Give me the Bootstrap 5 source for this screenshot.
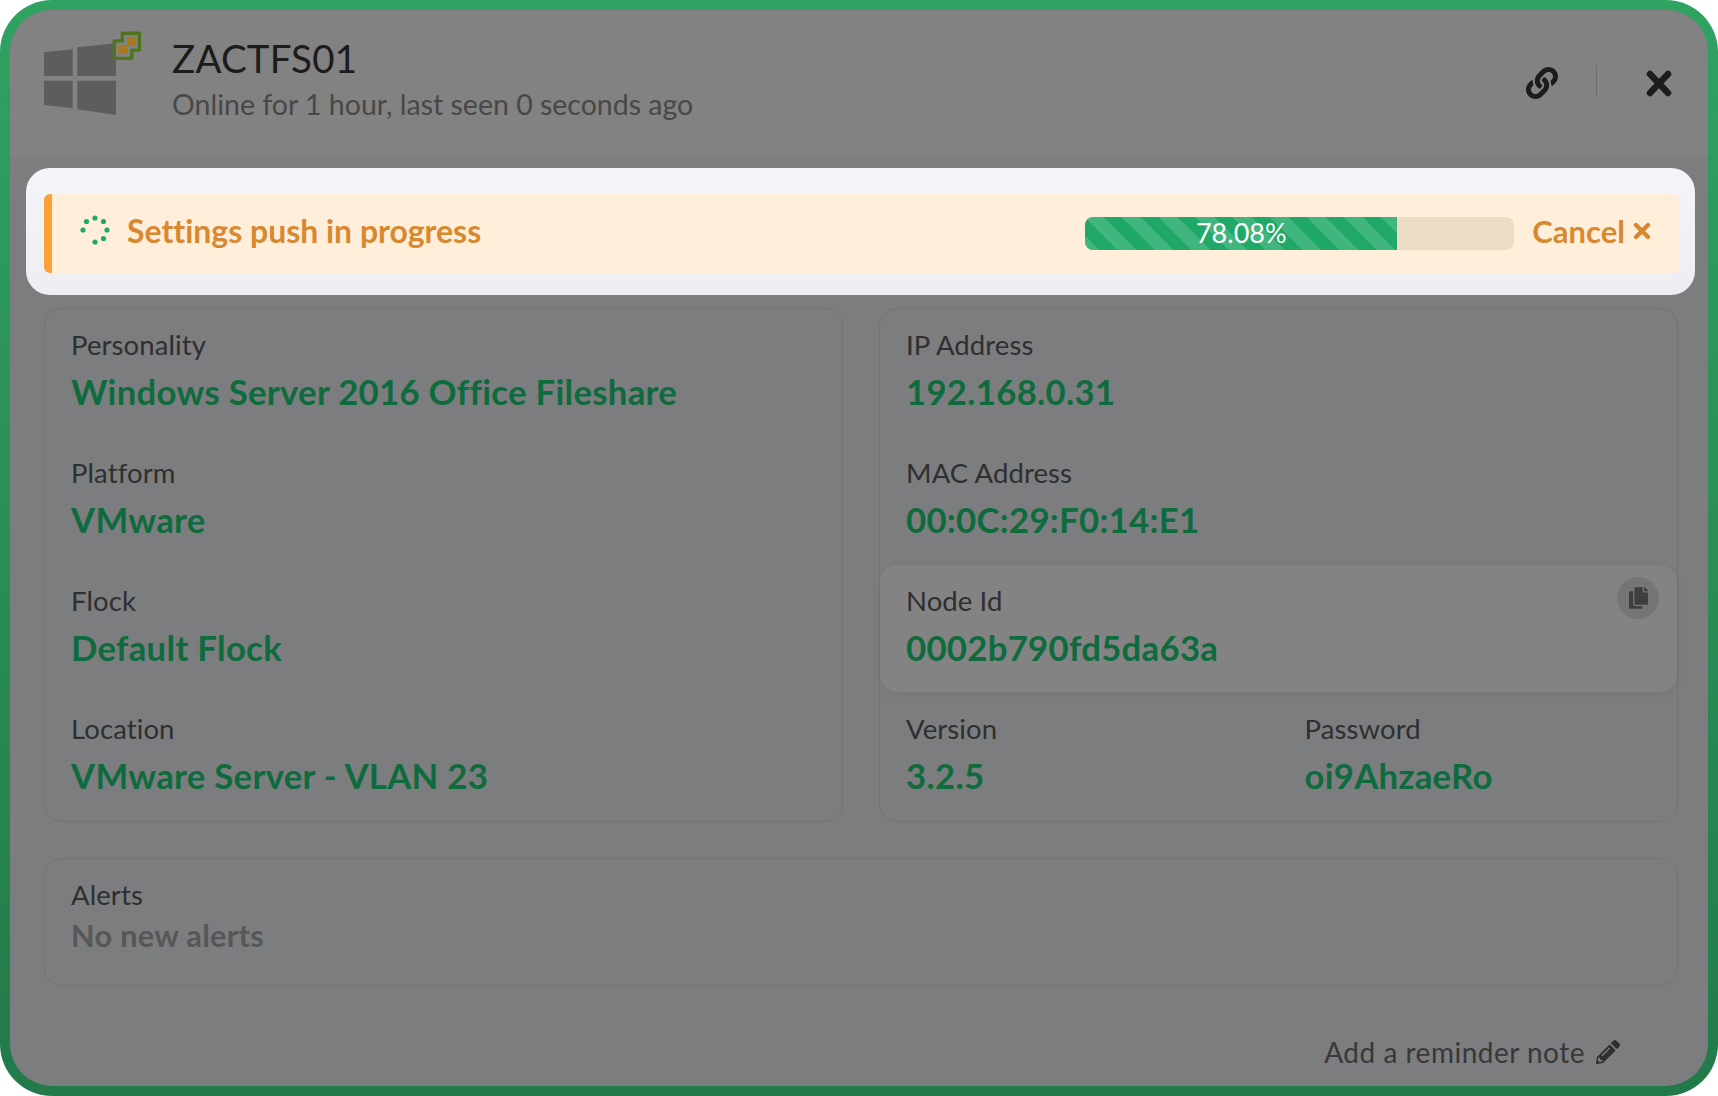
<!DOCTYPE html>
<html lang="en">
<head>
<meta charset="utf-8">
<title>ZACTFS01</title>
<link href="https://cdn.jsdelivr.net/npm/bootstrap@5.3.0/dist/css/bootstrap.min.css" rel="stylesheet">
<style>
html,body{height:100%;margin:0;background:#fff;font-family:"Lato","Noto Sans",sans-serif}
.shell{height:1096px;border-radius:52px;padding:10px;background:linear-gradient(180deg,#30a262 0%,#227a4a 100%);overflow:hidden}
.pane{height:1076px;border-radius:42px;background:#7c7d7f;overflow:hidden}
.head{height:147px;background:#828282;padding:21px 36px 0 34px}
.os-logo{width:100px;height:86px;flex:none}
.ttl{font-size:38.5px;line-height:50px;color:#1c1c1c;margin:2px 0 0;font-weight:400;letter-spacing:.2px}
.sub{font-size:28.5px;line-height:36px;color:#484848;margin-top:3px}
.head-txt{margin-left:28px}
.head-tools{padding-top:35px}
.vr-line{width:1px;height:30px;background:#6e6e6e;margin:0 49px 4px 38px}
.flash{margin:11px 13px 0 16px;padding:26px 16px 22px 18px;background:linear-gradient(180deg,#f4f5f9 0%,#eceef2 100%);border-radius:24px;height:127px}
.strip{height:79px;background:#ffeed9;border:0;border-left:8px solid #ff9f38;border-radius:6px;padding:0 28px 0 28px;color:#d8892f;font-size:32px;font-weight:700;margin:0}
.spin{margin-bottom:8px;flex:none}
.strip-msg{margin-left:17px;padding-bottom:5px;letter-spacing:-.02px}
.bar{width:429px;height:33px;background:#ecdcc6;border-radius:8px;font-size:27px;margin-right:18px}
.bar .progress-bar{background-color:#1fa866;background-size:37px 37px;color:#fff;font-weight:400;overflow:hidden}
.cancel{color:#d8892f;font-size:31px;font-weight:700;line-height:1;padding-bottom:5px}
.grid{padding:13px 30px 0 34px}
.grid .row{--bs-gutter-x:36px}
.box{border:1px solid #737476;border-radius:18px;background:#7c7d7f}
.cell{height:128px;padding:17px 26px 0;position:relative}
.cell-hi{background:#838383;border-radius:18px;height:127px;margin-bottom:1px;box-shadow:0 4px 12px rgba(0,0,0,.05)}
.lbl{font-size:27.5px;line-height:38px;color:#2f2f2f;letter-spacing:.1px}
.val{font-size:34.7px;line-height:46px;color:#0e6b3d;font-weight:700;margin-top:5px;letter-spacing:.3px}
.val-off{color:#565757;font-size:30.7px;margin-top:-1px}
.half{width:50%;height:100%}
.copy{position:absolute;top:12px;right:18px;width:42px;height:42px;border-radius:50%;background:#747576}
.alerts{height:128px;margin-top:36px;padding:17px 26px 0}
.note{padding:48px 58px 0 0;color:#383838;font-size:28px;line-height:36px;letter-spacing:.5px}
.note svg{margin-left:11px}
</style>
</head>
<body>
<div class="shell">
<div class="pane">
  <div class="head d-flex align-items-start">
    <svg class="os-logo" viewBox="0 0 100 86" aria-hidden="true">
      <path fill="#5d5d5d" d="M0 21.300 28.700 18.300V45H0ZM33.300 16.300 72 12.300V45H33.300ZM0 49.700H28.700V77.300L0 74ZM33.300 49.700H72V84L33.300 78.300Z"/>
      <path fill="none" stroke="#4f751a" stroke-width="3.400" stroke-linejoin="round" d="M78.300 2.300H95.400V19.100H87.700V27.400H70.300V9.900H78.300Z"/>
      <path fill="#a9781f" d="M83 6.300H91V15H83ZM74.300 14.300H83V23H74.300Z"/>
    </svg>
    <div class="head-txt">
      <h1 class="ttl">ZACTFS01</h1>
      <div class="sub">Online for 1 hour, last seen 0 seconds ago</div>
    </div>
    <div class="head-tools ms-auto d-flex align-items-center">
      <svg width="32" height="32" viewBox="0 0 512 512" aria-hidden="true"><path fill="#1c1c1c" d="M326.612 185.391c59.747 59.809 58.927 155.698.36 214.59-.11.12-.24.25-.36.37l-67.2 67.2c-59.27 59.27-155.699 59.262-214.96 0-59.27-59.26-59.27-155.7 0-214.96l37.106-37.106c9.84-9.84 26.786-3.3 27.294 10.606.648 17.722 3.826 35.527 9.69 52.721 1.986 5.822.567 12.262-3.783 16.612l-13.087 13.087c-28.026 28.026-28.905 73.66-1.155 101.96 28.024 28.579 74.086 28.749 102.325.51l67.2-67.19c28.191-28.191 28.073-73.757 0-101.83-3.701-3.694-7.429-6.564-10.341-8.569a16.037 16.037 0 0 1-6.947-12.606c-.396-10.567 3.348-21.456 11.698-29.806l21.054-21.055c5.521-5.521 14.182-6.199 20.584-1.731a152.482 152.482 0 0 1 20.522 17.197zM467.547 44.449c-59.261-59.262-155.69-59.27-214.96 0l-67.2 67.2c-.12.12-.25.25-.36.37-58.566 58.892-59.387 154.781.36 214.59a152.454 152.454 0 0 0 20.521 17.196c6.402 4.468 15.064 3.789 20.584-1.731l21.054-21.055c8.35-8.35 12.094-19.239 11.698-29.806a16.037 16.037 0 0 0-6.947-12.606c-2.912-2.005-6.64-4.875-10.341-8.569-28.073-28.073-28.191-73.639 0-101.83l67.2-67.19c28.239-28.239 74.3-28.069 102.325.51 27.75 28.3 26.872 73.934-1.155 101.96l-13.087 13.087c-4.35 4.35-5.769 10.79-3.783 16.612 5.864 17.194 9.042 34.999 9.69 52.721.509 13.906 17.454 20.446 27.294 10.606l37.106-37.106c59.271-59.259 59.271-155.699.001-214.959z"/></svg>
      <div class="vr-line"></div>
      <svg width="26" height="27" viewBox="0 0 26 27" aria-hidden="true"><path d="M4 4 22 23M22 4 4 23" stroke="#1c1c1c" stroke-width="6.500" stroke-linecap="round"/></svg>
    </div>
  </div>

  <div class="flash">
    <div class="alert strip d-flex align-items-center" role="alert">
      <svg class="spin" width="30" height="30" viewBox="0 0 30 30" aria-hidden="true"><g fill="#1fa866"><circle cx="15" cy="3" r="2.600"/><circle cx="23.500" cy="6.500" r="2.600"/><circle cx="27" cy="15" r="2.600"/><circle cx="23.500" cy="23.500" r="2.600"/><circle cx="15" cy="27" r="2.600"/><circle cx="6.500" cy="6.500" r="2.600"/><circle cx="3" cy="15" r="2.600"/></g></svg>
      <span class="strip-msg">Settings push in progress</span>
      <div class="ms-auto d-flex align-items-center">
        <div class="progress bar"><div class="progress-bar progress-bar-striped" style="width:72.7%">78.08%</div></div>
        <span class="cancel d-flex align-items-center">Cancel<svg class="ms-2" width="18" height="18" viewBox="0 0 18 18" aria-hidden="true"><path d="M3 3 15 15M15 3 3 15" stroke="#d8892f" stroke-width="4.400" stroke-linecap="round"/></svg></span>
      </div>
    </div>
  </div>

  <div class="grid">
    <div class="row">
      <div class="col-6">
        <div class="box">
          <div class="cell"><div class="lbl">Personality</div><div class="val">Windows Server 2016 Office Fileshare</div></div>
          <div class="cell"><div class="lbl">Platform</div><div class="val">VMware</div></div>
          <div class="cell"><div class="lbl">Flock</div><div class="val">Default Flock</div></div>
          <div class="cell"><div class="lbl">Location</div><div class="val">VMware Server - VLAN 23</div></div>
        </div>
      </div>
      <div class="col-6">
        <div class="box">
          <div class="cell"><div class="lbl">IP Address</div><div class="val">192.168.0.31</div></div>
          <div class="cell"><div class="lbl">MAC Address</div><div class="val">00:0C:29:F0:14:E1</div></div>
          <div class="cell cell-hi"><div class="lbl">Node Id</div><div class="val">0002b790fd5da63a</div>
            <div class="copy d-flex align-items-center justify-content-center"><svg width="19" height="22" viewBox="0 0 448 512" aria-hidden="true"><path fill="#3e3e3e" d="M320 448v40c0 13.255-10.745 24-24 24H24c-13.255 0-24-10.745-24-24V120c0-13.255 10.745-24 24-24h72v296c0 30.879 25.121 56 56 56h168zm0-344V0H152c-13.255 0-24 10.745-24 24v368c0 13.255 10.745 24 24 24h272c13.255 0 24-10.745 24-24V128H344c-13.2 0-24-10.8-24-24zm120.971-31.029L375.029 7.029A24 24 0 0 0 358.059 0H352v96h96v-6.059a24 24 0 0 0-7.029-16.97z"/></svg></div>
          </div>
          <div class="cell d-flex p-0">
            <div class="half cell"><div class="lbl">Version</div><div class="val">3.2.5</div></div>
            <div class="half cell"><div class="lbl">Password</div><div class="val">oi9AhzaeRo</div></div>
          </div>
        </div>
      </div>
    </div>
    <div class="box alerts"><div class="lbl">Alerts</div><div class="val val-off">No new alerts</div></div>
    <div class="note d-flex justify-content-end align-items-center">Add a reminder note<svg width="24" height="24" viewBox="0 0 512 512" aria-hidden="true"><path fill="#2e2e2e" d="M497.9 142.1l-46.1 46.1c-4.7 4.7-12.3 4.7-17 0l-111-111c-4.7-4.7-4.7-12.3 0-17l46.1-46.1c18.7-18.7 49.1-18.7 67.9 0l60.1 60.1c18.8 18.7 18.8 49.1 0 67.9zM284.2 99.8L21.6 362.4.4 483.9c-2.9 16.4 11.4 30.6 27.8 27.8l121.5-21.3 262.6-262.6c4.7-4.7 4.7-12.3 0-17l-111-111c-4.8-4.7-12.4-4.7-17.1 0zM124.1 339.9c-5.500-5.500-5.500-14.300 0-19.800l154-154c5.500-5.500 14.300-5.500 19.800 0s5.500 14.300 0 19.800l-154 154c-5.500 5.500-14.300 5.500-19.800 0zM88 424h48v36.300l-64.500 11.300-31.100-31.100L51.700 376H88v48z"/></svg></div>
  </div>
</div>
</div>
<script src="https://cdn.jsdelivr.net/npm/bootstrap@5.3.0/dist/js/bootstrap.bundle.min.js"></script>
</body>
</html>
